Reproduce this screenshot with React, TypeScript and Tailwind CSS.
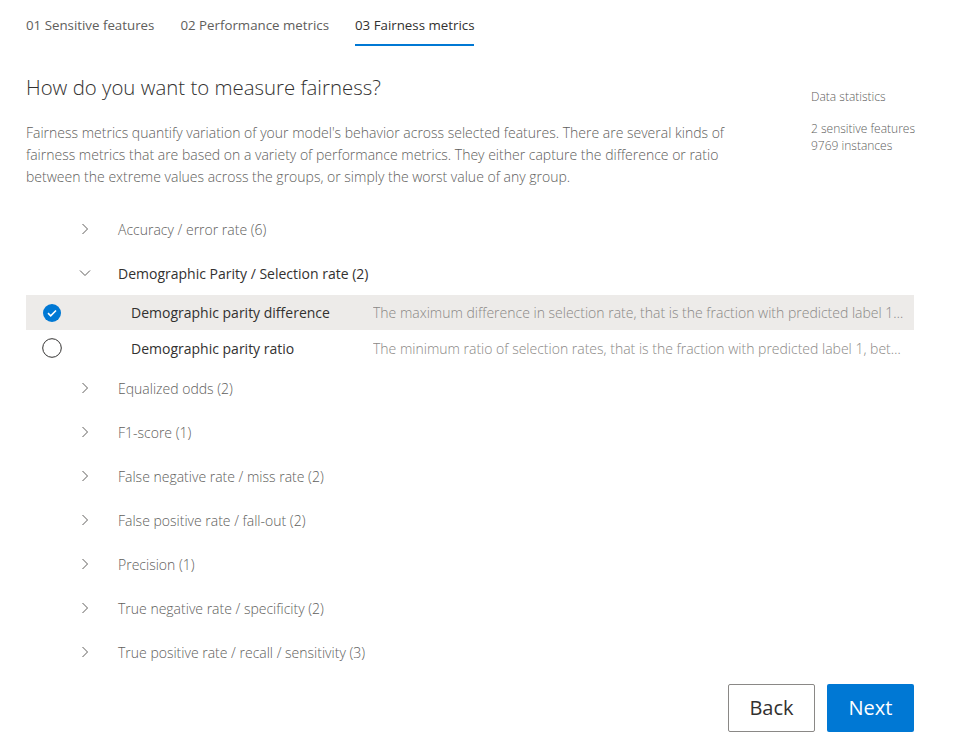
import { useState } from 'react';

const FONT = { fontFamily: '"Open Sans", "Noto Sans", sans-serif' };

const groups = [
    { name: 'Accuracy / error rate (6)' },
    {
        name: 'Demographic Parity / Selection rate (2)',
        open: true,
        items: [
            {
                label: 'Demographic parity difference',
                desc: 'The maximum difference in selection rate, that is the fraction with predicted label 1, between any two groups.',
            },
            {
                label: 'Demographic parity ratio',
                desc: 'The minimum ratio of selection rates, that is the fraction with predicted label 1, between any two groups.',
            },
        ],
    },
    { name: 'Equalized odds (2)' },
    { name: 'F1-score (1)' },
    { name: 'False negative rate / miss rate (2)' },
    { name: 'False positive rate / fall-out (2)' },
    { name: 'Precision (1)' },
    { name: 'True negative rate / specificity (2)' },
    { name: 'True positive rate / recall / sensitivity (3)' },
];

function Chevron({ open }: { open?: boolean }) {
    return (
        <svg width="14" height="14" viewBox="0 0 14 14" fill="none" stroke="#605e5c" strokeWidth="1">
            {open ? <path d="M2 4.5 L7 9.5 L12 4.5" /> : <path d="M4.5 2 L9.5 7 L4.5 12" />}
        </svg>
    );
}

function Radio({ checked }: { checked: boolean }) {
    if (checked) {
        return (
            <svg width="20" height="20" viewBox="0 0 20 20">
                <circle cx="10" cy="10" r="9" fill="#0078d4" />
                <path d="M6 10.2 L8.7 12.8 L14 7.5" fill="none" stroke="#fff" strokeWidth="1.6" />
            </svg>
        );
    }
    return (
        <svg width="20" height="20" viewBox="0 0 20 20">
            <circle cx="10" cy="10" r="9.3" fill="none" stroke="#323130" strokeWidth="1" />
        </svg>
    );
}

export default function App() {
    const [selected, setSelected] = useState('Demographic parity difference');

    return (
        <div className="min-h-[756px] w-[965px] bg-white px-[26px]" style={FONT}>
            {/* Tabs */}
            <div className="flex gap-[26px] pt-[14px] text-[13.3px] text-[#605e5c]">
                <div className="h-[32px] leading-[22px]">01 Sensitive features</div>
                <div className="h-[32px] leading-[22px]">02 Performance metrics</div>
                <div className="h-[32px] border-b-2 border-[#0078d4] leading-[22px] text-[#323130]">03 Fairness metrics</div>
            </div>

            {/* Header */}
            <div className="mt-[26px] flex">
                <div className="w-[740px]">
                    <h1 className="text-[20.4px] leading-[30px] font-light text-[#323130]">How do you want to measure fairness?</h1>
                    <p className="mt-[20px] text-[14px] leading-[22px] font-light text-[#605e5c]">
                        Fairness metrics quantify variation of your model's behavior across selected features. There are several kinds of fairness metrics that are based on a variety of performance metrics. They either capture the difference or ratio between the extreme values across the groups, or simply the worst value of any group.
                    </p>
                </div>
                <div className="ml-[45px] pt-[16px] text-[12px] leading-[17px] font-light text-[#605e5c]">
                    <div>Data statistics</div>
                    <div className="mt-[15px]">2 sensitive features</div>
                    <div>9769 instances</div>
                </div>
            </div>

            {/* Metric list */}
            <div className="mt-[19px] w-[888px]">
                {groups.map((g) => (
                    <div key={g.name}>
                        <div className="flex h-[44px] items-center">
                            <div className="ml-[52px] flex w-[40px] items-center">
                                <Chevron open={g.open} />
                            </div>
                            <span className={`text-[14px] ${g.open ? 'text-[#323130]' : 'font-light text-[#605e5c]'}`}>{g.name}</span>
                        </div>
                        {g.items?.map((it, i) => {
                            const checked = selected === it.label;
                            return (
                                <div
                                    key={it.label}
                                    onClick={() => setSelected(it.label)}
                                    className={`flex cursor-pointer items-center ${i === 0 ? 'h-[35px]' : 'h-[36px]'} ${checked ? 'bg-[#edebe9]' : ''}`}
                                >
                                    <div className="flex w-[105px] pl-[16px]">
                                        <Radio checked={checked} />
                                    </div>
                                    <span className="w-[242px] shrink-0 text-[14px] text-[#323130]">{it.label}</span>
                                    <span className="min-w-0 flex-1 truncate pr-[10px] text-[14px] font-light text-[#8a8886]">{it.desc}</span>
                                </div>
                            );
                        })}
                    </div>
                ))}
            </div>

            {/* Footer buttons */}
            <div className="mt-[10px] flex w-[888px] justify-end gap-[12px]">
                <button className="h-[48px] w-[87px] rounded-[2px] border border-[#8a8886] bg-white text-[20px] text-[#323130]">Back</button>
                <button className="h-[48px] w-[87px] rounded-[2px] bg-[#0078d4] text-[20px] text-white">Next</button>
            </div>
        </div>
    );
}
